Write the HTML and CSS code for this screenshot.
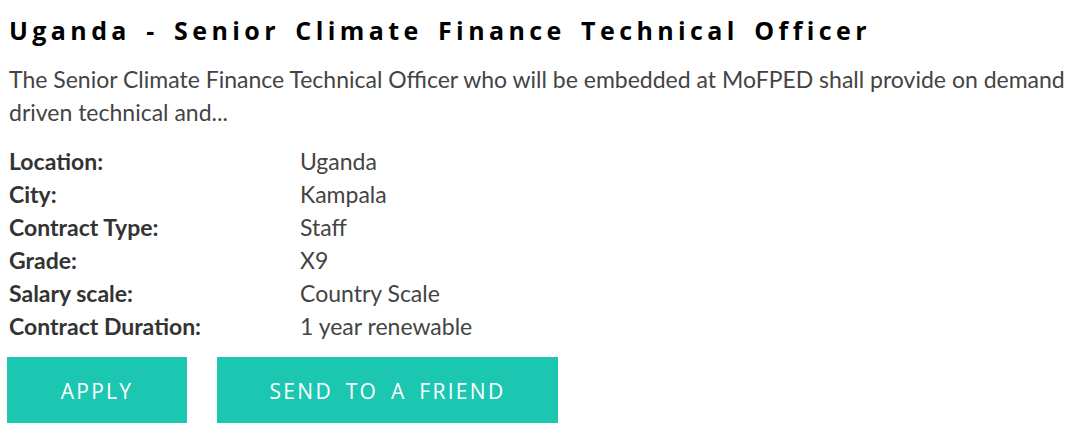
FILE: index.html
```html
<!DOCTYPE html>
<html>
<head>
<meta charset="utf-8">
<link rel="stylesheet" href="styles.css">
</head>
<body>
<div class="job">
  <h1 class="title">Uganda - Senior Climate Finance Technical Officer</h1>
  <p class="summary">The Senior Climate Finance Technical Officer who will be embedded at MoFPED shall provide on demand driven technical and...</p>
  <dl class="details">
    <dt>Location:</dt><dd>Uganda</dd>
    <dt>City:</dt><dd>Kampala</dd>
    <dt>Contract Type:</dt><dd>Staff</dd>
    <dt>Grade:</dt><dd>X9</dd>
    <dt>Salary scale:</dt><dd>Country Scale</dd>
    <dt>Contract Duration:</dt><dd>1 year renewable</dd>
  </dl>
  <div class="actions">
    <a class="btn btn-apply">APPLY</a>
    <a class="btn btn-send">SEND TO A FRIEND</a>
  </div>
</div>
</body>
</html>
```
FILE: styles.css
```css
html, body {
  margin: 0;
  padding: 0;
  background: #ffffff;
}
.job {
  padding: 12px 0 0 9px;
}
.title {
  margin: 0;
  font-family: "Open Sans", "DejaVu Sans", sans-serif;
  font-weight: 700;
  font-size: 25px;
  line-height: 36px;
  letter-spacing: 4.4px;
  word-spacing: 4.5px;
  color: #000000;
}
.summary {
  margin: 15px 0 0 0;
  font-family: Lato, "Noto Sans", sans-serif;
  font-size: 23px;
  line-height: 33px;
  color: #444444;
}
.details {
  margin: 16px 0 0 0;
  display: grid;
  grid-template-columns: 291px 1fr;
  font-family: Lato, "Noto Sans", sans-serif;
  font-size: 23px;
  line-height: 33px;
}
.details dt {
  font-weight: 700;
  color: #333333;
}
.details dd {
  margin: 0;
  color: #444444;
}
.actions {
  display: flex;
  gap: 30px;
  margin-top: 14px;
  margin-left: -2px;
}
.btn {
  display: flex;
  align-items: center;
  justify-content: center;
  height: 66px;
  padding-top: 2px;
  background: #1bc7b0;
  color: #ffffff;
  font-family: "Open Sans", "DejaVu Sans", sans-serif;
  font-size: 21px;
  letter-spacing: 2.3px;
  word-spacing: 5px;
  box-sizing: border-box;
}
.btn-apply {
  width: 180px;
}
.btn-send {
  width: 341px;
}
```
